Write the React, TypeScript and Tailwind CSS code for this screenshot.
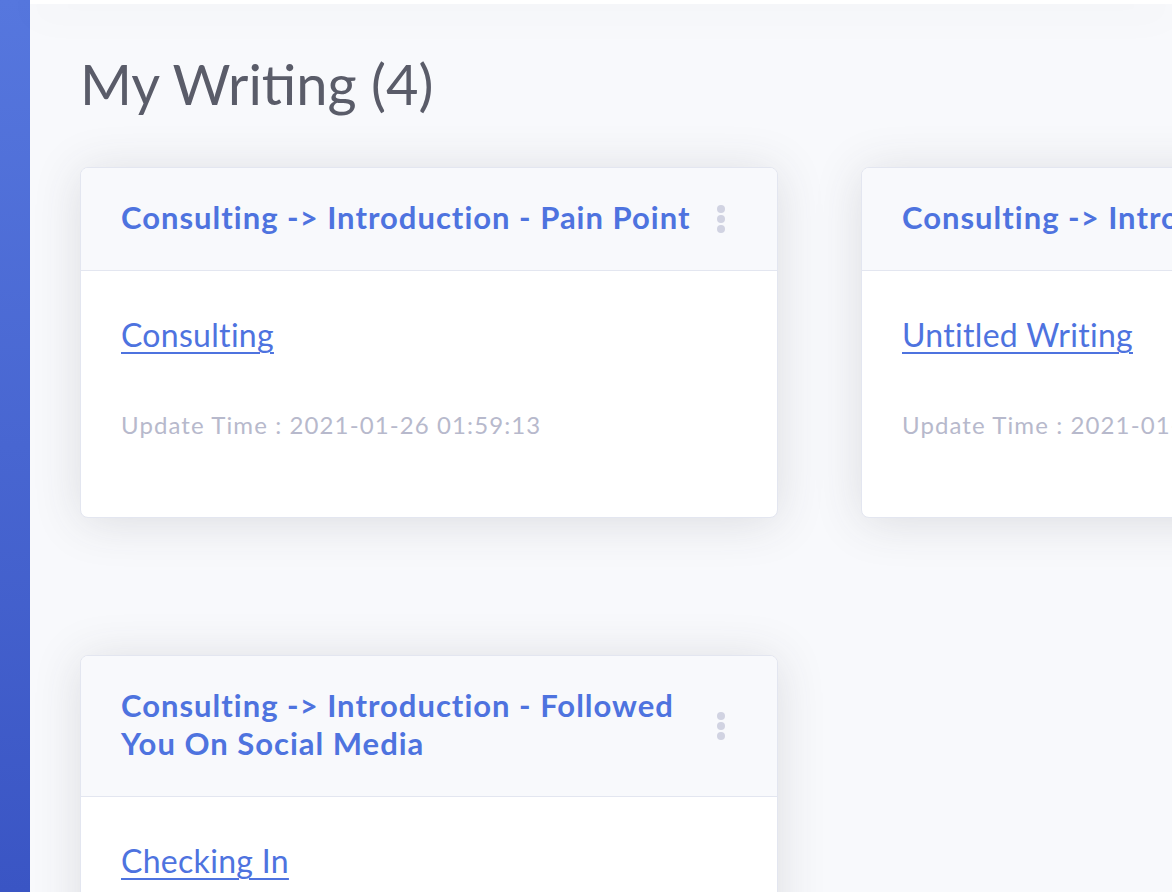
import React from "react";

type Card = { title: string; link: string; time: string };

const cards: Card[] = [
  { title: "Consulting -> Introduction - Pain Point", link: "Consulting", time: "2021-01-26 01:59:13" },
  { title: "Consulting -> Introduction - Referral", link: "Untitled Writing", time: "2021-01-26 01:48:02" },
  { title: "Consulting -> Introduction - Event", link: "Untitled Writing", time: "2021-01-25 22:10:41" },
  { title: "Consulting -> Introduction - Followed You On Social Media", link: "Checking In", time: "2021-01-25 21:37:09" },
];

function Dots() {
  return (
    <div className="flex flex-col items-center gap-[2px] shrink-0 ml-4 mt-[4px]">
      <span className="block w-[8px] h-[8px] rounded-full bg-[#d1d3e2]" />
      <span className="block w-[8px] h-[8px] rounded-full bg-[#d1d3e2]" />
      <span className="block w-[8px] h-[8px] rounded-full bg-[#d1d3e2]" />
    </div>
  );
}

function WritingCard({ c }: { c: Card }) {
  return (
    <div className="w-[698px] shrink-0 bg-white border border-[#e3e6f0] rounded-[8px] shadow-[0_4px_48px_0_rgba(58,59,69,0.15)] overflow-hidden">
      <div className="bg-[#f8f9fc] border-b border-[#e3e6f0] pl-[40px] pr-[52px] pt-[30px] pb-[34px] flex items-center justify-between">
        <h6 className="text-[31px] leading-[38px] tracking-[1px] font-bold text-[#4e73df] m-0">{c.title}</h6>
        <Dots />
      </div>
      <div className="px-[40px] pt-[45px] pb-[75px]">
        <a href="#" className="block text-[32px] leading-[38px] tracking-[0.3px] text-[#4e73df] underline underline-offset-[5px] decoration-[2px]">
          {c.link}
        </a>
        <p className="mt-[54px] text-[24px] leading-[34px] tracking-[1.1px] text-[#b7b9cc] whitespace-nowrap">Update Time : {c.time}</p>
      </div>
    </div>
  );
}

export default function App() {
  return (
    <div className="w-[1172px] h-[892px] overflow-hidden flex bg-[#f8f9fc]" style={{ fontFamily: "Lato, 'Noto Sans', sans-serif" }}>
      <div className="w-[30px] shrink-0 h-full bg-[linear-gradient(180deg,#5677de_0%,#3a55c4_100%)]" />
      <div className="flex-1 min-w-0 flex flex-col">
        <div className="h-[4px] bg-white shadow-[0_4px_40px_0_rgba(58,59,69,0.15)] relative z-10 shrink-0" />
        <div className="pl-[50px] pt-[46px]">
          <h1 className="text-[56px] leading-[68px] font-normal text-[#5a5c69]">My Writing (4)</h1>
          <div className="mt-[49px] flex flex-col gap-[137px]">
            <div className="flex items-start gap-[83px]">
              <WritingCard c={cards[0]} />
              <WritingCard c={cards[1]} />
              <WritingCard c={cards[2]} />
            </div>
            <div className="flex items-start gap-[83px]">
              <WritingCard c={cards[3]} />
            </div>
          </div>
        </div>
      </div>
    </div>
  );
}
